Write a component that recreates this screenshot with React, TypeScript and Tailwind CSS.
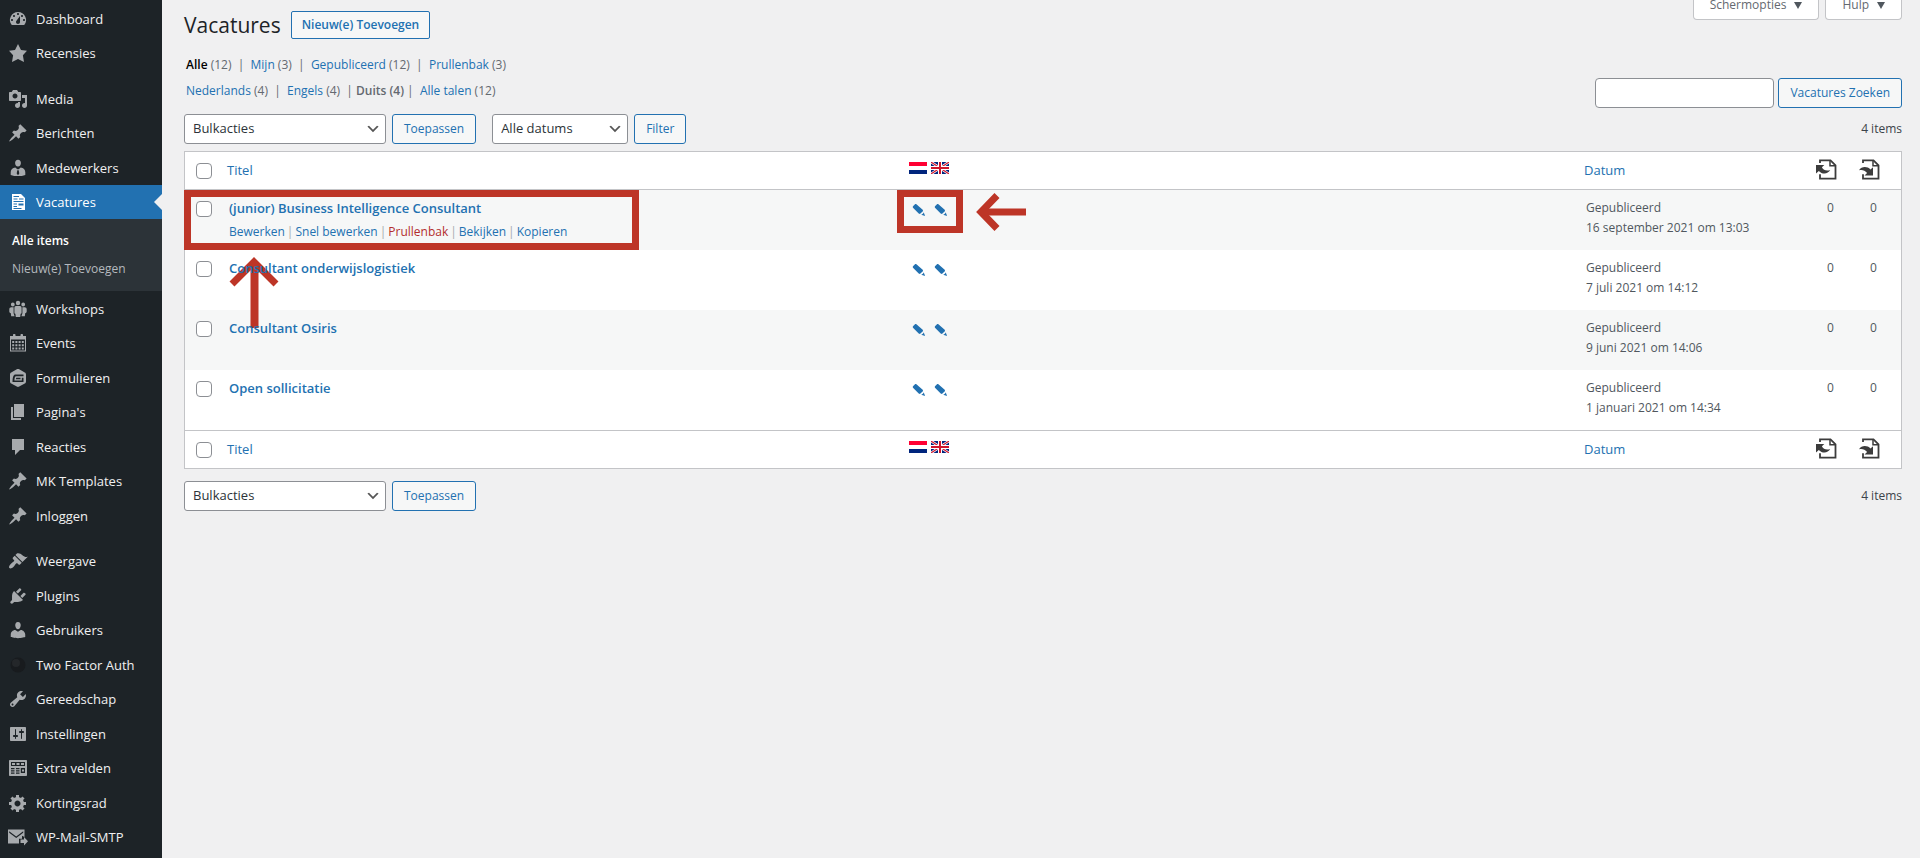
import { ReactNode } from "react"

const ICONS: Record<string, ReactNode> = {
  dashboard: (
    <path d="M3.76 16h12.48A7.998 7.998 0 0 0 10 3a7.998 7.998 0 0 0-6.24 13zM10 4c.55 0 1 .45 1 1s-.45 1-1 1-1-.45-1-1 .45-1 1-1zM6 6c.55 0 1 .45 1 1s-.45 1-1 1-1-.45-1-1 .45-1 1-1zm8 0c.55 0 1 .45 1 1s-.45 1-1 1-1-.45-1-1 .45-1 1-1zm-5.37 5.55L12 7v6c0 1.1-.9 2-2 2s-2-.9-2-2c0-.57.24-1.08.63-1.45zM4 10c.55 0 1 .45 1 1s-.45 1-1 1-1-.45-1-1 .45-1 1-1zm12 0c.55 0 1 .45 1 1s-.45 1-1 1-1-.45-1-1 .45-1 1-1z" />
  ),
  star: <path d="m10 1 3 6 6 .75-4.12 4.62L16 19l-6-3-6 3 1.13-6.63L1 7.75 7 7z" />,
  media: (
    <path d="M13 11V4c0-.55-.45-1-1-1h-1.67L9 1H5L3.67 3H2c-.55 0-1 .45-1 1v7c0 .55.45 1 1 1h10c.55 0 1-.45 1-1zM7 4.5c1.38 0 2.5 1.12 2.5 2.5S8.38 9.5 7 9.5 4.5 8.38 4.5 7 5.62 4.5 7 4.5zM14 6h5v10.5c0 1.38-1.12 2.5-2.5 2.5S14 17.88 14 16.5s1.12-2.5 2.5-2.5c.17 0 .34.02.5.05V9h-3V6zm-4 8.05V13h2v3.5c0 1.38-1.12 2.5-2.5 2.5S7 17.88 7 16.5 8.12 14 9.5 14c.17 0 .34.02.5.05z" />
  ),
  pin: (
    <path d="M10.44 3.02l1.82-1.82 6.36 6.35-1.83 1.82c-1.05-.68-2.48-.57-3.41.36l-.75.75c-.92.93-1.04 2.35-.35 3.41l-1.83 1.82-2.41-2.41-2.8 2.79c-.42.42-3.38 2.71-3.8 2.29s1.86-3.39 2.28-3.81l2.79-2.79L4.1 9.36l1.83-1.82c1.05.69 2.48.57 3.4-.36l.75-.75c.93-.92 1.05-2.35.36-3.41z" />
  ),
  businessman: (
    <path
      fillRule="evenodd"
      d="M10 8.6c-1.9 0-2.9-1.7-2.9-3.6S8.1 1.7 10 1.7 12.9 3.1 12.9 5 11.9 8.6 10 8.6zM7.3 9.4 9.3 11.3h1.4L12.7 9.4c2.8.3 4.6 2.3 4.6 4.9v2.6c-2.2.8-4.7 1.2-7.3 1.2s-5.1-.4-7.3-1.2v-2.6c0-2.6 1.8-4.6 4.6-4.9zM9.3 12.2 8.7 15.6 10 17.2l1.3-1.6-.6-3.4z"
    />
  ),
  document: (
    <path
      fillRule="evenodd"
      d="M4 2h9l4 4v12H4zM5.5 4v1h5.5V4zM5.5 6.5v1h4v-1zM11 6.5v1h4.500v-1zM5.5 9v1h10V9zM5.5 11.500v1h3.500v-1zM10.500 11.500v2h5v-2zM5.500 14v1h3.500v-1zM5.500 16v1h8v-1z"
    />
  ),
  groups: (
    <path d="M10 1.8a2.200 2.200 0 1 1 0 4.400 2.200 2.200 0 0 1 0-4.400zM4.800 3.600a1.900 1.900 0 1 1 0 3.800 1.900 1.900 0 0 1 0-3.800zM15.200 3.600a1.900 1.900 0 1 1 0 3.800 1.900 1.900 0 0 1 0-3.800zM8 7h4c1.100 0 1.600.9 1.600 2v4.500c0 .8-.4 1.200-1 1.300L12.200 18H7.800l-.4-3.200c-.6-.1-1-.5-1-1.300V9c0-1.100.5-2 1.600-2zM3.300 8.200h2.300v6.100l1 2.900H3.200L2.700 14C1.800 13.800 1.300 13.300 1.300 12.400V10.200c0-1.100.8-2 2-2zM16.700 8.200h-2.300v6.100l-1 2.900h3.400l.5-3.200c.9-.2 1.400-.7 1.400-1.600V10.200c0-1.100-.8-2-2-2z" />
  ),
  calendar: (
    <path
      fillRule="evenodd"
      d="M5 3V2c0-.6.4-1 1-1h.5c.6 0 1 .4 1 1v1h5V2c0-.6.4-1 1-1h.5c.6 0 1 .4 1 1v1h3v15.500H2V3zM3 6.500v11h14v-11zM4.200 8h2v2h-2zM7.400 8h2v2h-2zM10.600 8h2v2h-2zM13.800 8h2v2h-2zM4.200 11.200h2v2h-2zM7.400 11.200h2v2h-2zM10.600 11.200h2v2h-2zM13.800 11.200h2v2h-2zM4.200 14.400h2v2h-2zM7.400 14.400h2v2h-2zM10.600 14.400h2v2h-2zM13.800 14.400h2v2h-2z"
    />
  ),
  forms: (
    <path
      fillRule="evenodd"
      d="M11.200 1.300l5.600 3.200c.7.4 1.200 1.200 1.200 2v6.900c0 .8-.5 1.600-1.200 2l-5.600 3.200c-.7.4-1.700.4-2.400 0l-5.600-3.200c-.7-.4-1.200-1.200-1.200-2V6.500c0-.8.5-1.600 1.200-2l5.600-3.200c.7-.4 1.700-.4 2.400 0zM7.500 6.500C5.500 6.500 4.700 8.500 4.500 14h11v-4.300h-1.700v2.700H6.400c.2-3 .6-4.100 1.600-4.100h7.500V6.500zM8.300 9.700 7.800 11.300h4.700v-1.600z"
    />
  ),
  page: <path d="M6 15V2h10v13H6zm-1 1h8v2H3V5h2v11z" />,
  comment: <path d="M4 2h12v11h-4l-5 5v-5H4z" />,
  brush: (
    <path d="M14.48 11.06L7.41 3.99l1.5-1.5c.5-.56 2.3-.47 3.51.32 1.21.8 1.43 1.28 2.91 2.1 1.18.64 2.45 1.26 4.45.85zm-.71.71L6.7 4.7 4.93 6.47c-.39.39-.39 1.02 0 1.41l1.06 1.06c.39.39.39 1.03 0 1.42-.6.6-1.43 1.11-2.21 1.69-.35.26-.7.53-1.01.84C1.43 14.23.4 16.08 1.4 17.07c.99 1 2.84-.03 4.18-1.36.31-.31.58-.66.85-1.02.57-.78 1.08-1.61 1.69-2.21.39-.39 1.02-.39 1.41 0l1.06 1.06c.39.39 1.02.39 1.41 0z" />
  ),
  plug: (
    <path d="M13.11 4.36L9.87 7.6 8 5.73l3.24-3.24c.35-.34 1.05-.2 1.56.32.52.51.66 1.21.31 1.55zm-8 1.77l.91-1.12 9.01 9.01-1.19.84c-.71.71-2.63 1.16-3.82 1.16H6.14L4.9 17.26c-.59.59-1.54.59-2.12 0-.59-.58-.59-1.53 0-2.12l1.24-1.24v-3.88c0-1.13.4-3.19 1.09-3.89zm7.26 3.97l3.24-3.24c.34-.35 1.04-.21 1.55.31.52.51.66 1.21.31 1.55l-3.24 3.25z" />
  ),
  user: (
    <path d="M10 9.25c-2.27 0-2.73-3.44-2.73-3.44C7 4.02 7.82 2 9.97 2c2.16 0 2.98 2.02 2.71 3.81 0 0-.41 3.44-2.68 3.44zm0 2.57L12.72 10c2.39 0 4.52 2.33 4.52 4.53v2.49s-3.65 1.13-7.24 1.13c-3.65 0-7.24-1.13-7.24-1.13v-2.49c0-2.25 1.94-4.48 4.47-4.48z" />
  ),
  twoFactor: (
    <>
      <circle cx="10" cy="10" r="7.5" fill="#181b1e" />
      <circle cx="8" cy="8" r="4" fill="#24272a" />
    </>
  ),
  wrench: (
    <path d="M16.68 9.77c-1.34 1.34-3.3 1.67-4.95.99l-5.41 6.52c-.99.99-2.59.99-3.58 0s-.99-2.59 0-3.57l6.52-5.42c-.68-1.65-.35-3.61.99-4.95 1.28-1.28 3.12-1.62 4.72-1.06l-2.89 2.89 2.82 2.82 2.86-2.87c.53 1.58.18 3.39-1.08 4.65zM3.81 16.21c.4.39 1.04.39 1.43 0 .4-.4.4-1.04 0-1.43-.39-.4-1.03-.4-1.43 0-.39.39-.39 1.03 0 1.43z" />
  ),
  sliders: (
    <path d="M18 16V4c0-.55-.45-1-1-1H3c-.55 0-1 .45-1 1v12c0 .55.45 1 1 1h14c.55 0 1-.45 1-1zM8 11h1c.55 0 1 .45 1 1s-.45 1-1 1H8v1.5c0 .28-.22.5-.5.5s-.5-.22-.5-.5V13H6c-.55 0-1-.45-1-1s.45-1 1-1h1V5.5c0-.28.22-.5.5-.5s.5.22.5.5V11zm5-2h-1c-.55 0-1-.45-1-1s.45-1 1-1h1V5.5c0-.28.22-.5.5-.5s.5.22.5.5V7h1c.55 0 1 .45 1 1s-.45 1-1 1h-1v5.5c0 .28-.22.5-.5.5s-.5-.22-.5-.5V9z" />
  ),
  fields: (
    <path
      fillRule="evenodd"
      d="M19 17V3c0-.55-.45-1-1-1H2c-.55 0-1 .45-1 1v14c0 .55.45 1 1 1h16c.55 0 1-.45 1-1zM3 4h14v4H3zM4 5v2h3V5zM8.500 5v2h3V5zM13 5v2h3V5zM3 10h3.500v1.200H3zM8 10h3.500v1.200H8zM3 12.300h3.500v1.200H3zM8 12.300h3.500v1.200H8zM3 14.600h3.500v1.200H3zM8 14.600h3.500v1.200H8zM12.800 10H17v5h-4.200zM14 11.500v2h2v-2z"
    />
  ),
  gear: (
    <path d="M18 12h-2.18c-.17.7-.44 1.35-.81 1.93l1.54 1.54-2.1 2.1-1.54-1.54c-.58.36-1.23.63-1.91.79V19H8v-2.18c-.68-.16-1.33-.43-1.91-.79l-1.54 1.54-2.12-2.12 1.54-1.54c-.36-.58-.63-1.23-.79-1.91H1V9.03h2.17c.16-.7.44-1.35.8-1.94L2.43 5.55l2.1-2.1 1.54 1.54c.58-.37 1.24-.64 1.93-.81V2h3v2.18c.68.16 1.33.43 1.91.79l1.54-1.54 2.12 2.12-1.54 1.54c.36.59.64 1.24.8 1.94H18V12zm-8.5 1.5c1.66 0 3-1.34 3-3s-1.34-3-3-3-3 1.34-3 3 1.34 3 3 3z" />
  ),
  mail: (
    <path
      fillRule="evenodd"
      d="M0 2.500h16.500v7.500l-2.500-1.200v3H11v4.700H0zM1.200 4.200v1.500L8.200 11l7-5.300V4.200l-7 5.200zM12.500 12.500H16V10l4 4.200-4 4.200V16h-3.500z"
    />
  ),
}

const MENU = [
  { label: "Dashboard", icon: "dashboard" },
  { label: "Recensies", icon: "star" },
  { label: "Media", icon: "media", gap: true },
  { label: "Berichten", icon: "pin" },
  { label: "Medewerkers", icon: "businessman" },
  { label: "Vacatures", icon: "document", active: true },
  { label: "Workshops", icon: "groups" },
  { label: "Events", icon: "calendar" },
  { label: "Formulieren", icon: "forms" },
  { label: "Pagina's", icon: "page" },
  { label: "Reacties", icon: "comment" },
  { label: "MK Templates", icon: "pin" },
  { label: "Inloggen", icon: "pin" },
  { label: "Weergave", icon: "brush", gap: true },
  { label: "Plugins", icon: "plug" },
  { label: "Gebruikers", icon: "user" },
  { label: "Two Factor Auth", icon: "twoFactor" },
  { label: "Gereedschap", icon: "wrench" },
  { label: "Instellingen", icon: "sliders" },
  { label: "Extra velden", icon: "fields" },
  { label: "Kortingsrad", icon: "gear" },
  { label: "WP-Mail-SMTP", icon: "mail" },
]

const STATUS_LINKS = [
  { label: "Alle", count: 12, current: true },
  { label: "Mijn", count: 3 },
  { label: "Gepubliceerd", count: 12 },
  { label: "Prullenbak", count: 3 },
]

const ROWS = [
  { title: "(junior) Business Intelligence Consultant", date: "16 september 2021 om 13:03", marked: true },
  { title: "Consultant onderwijslogistiek", date: "7 juli 2021 om 14:12" },
  { title: "Consultant Osiris", date: "9 juni 2021 om 14:06" },
  { title: "Open sollicitatie", date: "1 januari 2021 om 14:34" },
]

const ACTIONS = ["Bewerken", "Snel bewerken", "Prullenbak", "Bekijken", "Kopieren"]

function Sidebar() {
  return (
    <nav className="w-[162px] shrink-0 self-stretch bg-[#1d2327] pt-[2px]">
      <ul>
        {MENU.map((item) => (
          <li key={item.label} className={item.gap ? "pt-[11px] even:pb-px" : "even:pb-px"}>
            <a
              href="#"
              className={`relative flex h-[34px] items-center pl-2 text-[13px] leading-[18px] ${item.active ? "bg-[#2271b1] text-white" : "text-[#f0f0f1]"}`}
            >
              <svg viewBox="0 0 20 20" className={`mr-2 h-5 w-5 shrink-0 ${item.active ? "fill-white" : "fill-[#a7aaad]"}`}>
                {ICONS[item.icon]}
              </svg>
              <span className="whitespace-nowrap">{item.label}</span>
              {item.active && (
                <span className="absolute right-0 border-y-8 border-r-8 border-y-transparent border-r-[#f0f0f1]" />
              )}
            </a>
            {item.active && (
              <ul className="bg-[#2c3338] px-3 py-2 text-[12px] leading-[18px]">
                <li className="py-[5px]">
                  <a href="#" className="font-semibold text-white">Alle items</a>
                </li>
                <li className="py-[5px] whitespace-nowrap">
                  <a href="#" className="text-[#b4b9be]">Nieuw(e) Toevoegen</a>
                </li>
              </ul>
            )}
          </li>
        ))}
      </ul>
    </nav>
  )
}

function Button({ children }: { children: ReactNode }) {
  return (
    <button className="h-[30px] rounded-[3px] border border-[#2271b1] bg-[#f6f7f7] px-[11px] text-[12px] whitespace-nowrap text-[#2271b1]">
      {children}
    </button>
  )
}

function Select({ label, width }: { label: string; width: string }) {
  return (
    <div className={`relative ${width}`}>
      <select
        aria-label={label}
        className="block h-[30px] w-full appearance-none rounded-[3px] border border-[#8c8f94] bg-white pr-6 pl-2 text-[13px] text-[#2c3338]"
      >
        <option>{label}</option>
      </select>
      <svg viewBox="0 0 20 20" className="pointer-events-none absolute top-[7px] right-[5px] h-4 w-4 fill-[#555]">
        <path d="M5 6l5 5 5-5 2 1-7 7-7-7 2-1z" />
      </svg>
    </div>
  )
}

function Checkbox({ label }: { label: string }) {
  return (
    <input
      type="checkbox"
      aria-label={label}
      className="block h-4 w-4 appearance-none rounded-[4px] border border-[#8c8f94] bg-white"
    />
  )
}

function Flags() {
  return (
    <div className="flex gap-1">
      <svg viewBox="0 0 18 12" className="h-3 w-[18px]" role="img" aria-label="Nederlands">
        <path fill="#f03" d="M0 0h18v4H0z" />
        <path fill="#fff" d="M0 4h18v4H0z" />
        <path fill="#00257d" d="M0 8h18v4H0z" />
      </svg>
      <svg viewBox="0 0 18 12" className="h-3 w-[18px]" role="img" aria-label="English">
        <path fill="#00247d" d="M0 0h18v12H0z" />
        <path stroke="#fff" strokeWidth="2.6" d="M0 0l18 12M18 0L0 12" />
        <path stroke="#cf142b" strokeWidth="1.1" d="M0 0l18 12M18 0L0 12" />
        <path stroke="#fff" strokeWidth="4" d="M9 0v12M0 6h18" />
        <path stroke="#cf142b" strokeWidth="2" d="M9 0v12M0 6h18" />
      </svg>
    </div>
  )
}

function Pencil() {
  return (
    <a href="#" aria-label="Vertaling bewerken" className="block">
      <svg viewBox="0 0 14 14" className="h-[14px] w-[14px] fill-[#2271b1]">
        <path d="M1 3.300 3 1.200c.4-.4 1-.4 1.400 0l6.300 5.600.4 1.200-3.200 3.100-1.200-.5L1 4.700c-.4-.4-.4-1 0-1.400z" />
        <path d="M11.700 9.300l1.400 3.800-3.900-1.300 1-.6 1.100-1z" />
      </svg>
    </a>
  )
}

function DocIcon({ out }: { out?: boolean }) {
  return (
    <svg viewBox="0 0 21 21" className="h-[21px] w-[21px]">
      <path fill="none" stroke="#3c3c3c" strokeWidth="1.8" d="M4 4V1.300h10.500l5 5v13.400H4v-4.500" />
      <path fill="none" stroke="#3c3c3c" strokeWidth="1.5" d="M14 1.500v5.300h5.500" />
      {out ? (
        <path fill="#3c3c3c" d="M0 11.200C2.500 7.300 8 7 11.500 10.500L14 8.200v8.300H5.500l2.600-2.400C6 11.300 3 10.300 0 11.200z" />
      ) : (
        <path fill="#3c3c3c" d="M0 6h8.300L5.900 8.300c1.500 3 4.700 4 8.300 2.700-2.300 4.300-8 4.600-11.400.9L0 14.500z" />
      )}
    </svg>
  )
}

function HeadCells() {
  return (
    <>
      <th className="pl-[11px] text-left">
        <Checkbox label="Alles selecteren" />
      </th>
      <th className="pl-[10px] text-left font-normal">
        <a href="#" className="text-[13px] text-[#2271b1]">Titel</a>
      </th>
      <th className="pb-[6px] pl-[10px]">
        <Flags />
      </th>
      <th className="pl-[10px] text-left font-normal">
        <a href="#" className="text-[13px] text-[#2271b1]">Datum</a>
      </th>
      <th className="pb-[2px] pl-[9px]">
        <DocIcon />
      </th>
      <th className="pb-[2px] pl-[9px]">
        <DocIcon out />
      </th>
    </>
  )
}

function PostsTable() {
  return (
    <table className="w-full table-fixed border-separate border-spacing-0 border border-[#c3c4c7] bg-white text-[12px] leading-5 text-[#50575e]">
      <colgroup>
        <col className="w-8" />
        <col />
        <col className="w-[675px]" />
        <col className="w-[233px]" />
        <col className="w-[43px]" />
        <col className="w-[51px]" />
      </colgroup>
      <thead>
        <tr className="h-[38px] *:border-b *:border-[#c3c4c7]">
          <HeadCells />
        </tr>
      </thead>
      <tbody>
        {ROWS.map((row) => (
          <tr key={row.title} className="h-[60px] align-top odd:bg-[#f6f7f7]">
            <td className="pt-[11px] pl-[11px]">
              <Checkbox label={`Selecteer ${row.title}`} />
            </td>
            <td className="relative pt-2 pl-3 whitespace-nowrap">
              <a href="#" className="block text-[13px] font-semibold text-[#2271b1]">{row.title}</a>
              {row.marked && (
                <>
                  <div className="mt-1 flex">
                    {ACTIONS.map((action, n) => (
                      <span key={action} className="text-[#a7aaad]">
                        <a href="#" className={action === "Prullenbak" ? "text-[#b32d2e]" : "text-[#2271b1]"}>{action}</a>
                        {n < ACTIONS.length - 1 && <span className="px-[2px]">|</span>}
                      </span>
                    ))}
                  </div>
                  <div className="pointer-events-none absolute top-0 -left-[33px] h-[60px] w-[455px] border-[7px] border-[#bd3527]" />
                  <svg viewBox="0 0 50 72" className="pointer-events-none absolute top-[67px] left-3 h-[72px] w-[50px]">
                    <path fill="none" stroke="#bd3527" strokeWidth="7" d="M3 27 25 5l22 22" />
                    <path fill="#bd3527" d="M21.500 5h8v66h-8z" />
                  </svg>
                </>
              )}
            </td>
            <td className="relative pt-[13px] pl-[13px]">
              <div className="flex gap-2">
                <Pencil />
                <Pencil />
              </div>
              {row.marked && (
                <>
                  <div className="pointer-events-none absolute top-0 left-[-2px] h-[43px] w-[66px] border-[7px] border-[#bd3527]" />
                  <svg viewBox="0 0 50 38" className="pointer-events-none absolute top-[3px] left-[77px] h-[38px] w-[50px]">
                    <path fill="none" stroke="#bd3527" strokeWidth="7" d="M21 2.500 5 19l16 16.500" />
                    <path fill="#bd3527" d="M5 15.500h45v7H5z" />
                  </svg>
                </>
              )}
            </td>
            <td className="pt-2 pl-3">
              Gepubliceerd
              <br />
              {row.date}
            </td>
            <td className="pt-2 pl-5">0</td>
            <td className="pt-2 pl-5">0</td>
          </tr>
        ))}
      </tbody>
      <tfoot>
        <tr className="h-[38px] *:border-t *:border-[#c3c4c7]">
          <HeadCells />
        </tr>
      </tfoot>
    </table>
  )
}

export default function App() {
  return (
    <div className="flex min-h-screen bg-[#f0f0f1] font-['Open_Sans','Noto_Sans',sans-serif] text-[12px] text-[#3c434a]">
      <Sidebar />
      <main className="min-w-0 flex-1 pr-[18px] pl-[22px]">
        <div className="flex items-start justify-between">
          <div className="flex items-center gap-[10px] pt-[10px]">
            <h1 className="text-[21px] leading-[30px] text-[#1d2327]">Vacatures</h1>
            <button className="h-7 rounded-[2px] border border-[#2271b1] bg-[#f6f7f7] px-[10px] text-[12px] font-semibold text-[#2271b1]">
              Nieuw(e) Toevoegen
            </button>
          </div>
          <div className="flex gap-[6px]">
            {["Schermopties", "Hulp"].map((label) => (
              <button
                key={label}
                className="flex h-5 items-center gap-2 rounded-b-[4px] border border-t-0 border-[#c3c4c7] bg-white px-4 pb-[9px] text-[12px] leading-[10px] text-[#646970]"
              >
                {label}
                <span className="border-x-4 border-t-[7px] border-x-transparent border-t-[#50575e]" />
              </button>
            ))}
          </div>
        </div>

        <div className="flex justify-between">
          <div className="pt-3 pb-1 pl-[2px] leading-[26px] text-[#646970]">
            <div className="whitespace-pre">
              {STATUS_LINKS.map((s, i) => (
                <span key={s.label}>
                  <a href="#" className={s.current ? "font-semibold text-black" : "text-[#2271b1]"}>{s.label}</a>
                  {` (${s.count})`}
                  {i < STATUS_LINKS.length - 1 && "  |  "}
                </span>
              ))}
            </div>
            <div className="whitespace-pre">
              <a href="#" className="text-[#2271b1]">Nederlands</a>
              {" (4)  |  "}
              <a href="#" className="text-[#2271b1]">Engels</a>
              {" (4)  | "}
              <span className="font-semibold">Duits (4)</span>
              {" |  "}
              <a href="#" className="text-[#2271b1]">Alle talen</a>
              {" (12)"}
            </div>
          </div>
          <div className="flex items-end gap-1">
            <input
              type="search"
              aria-label="Vacatures Zoeken"
              className="h-[30px] w-[179px] rounded-[4px] border border-[#8c8f94] bg-white px-2"
            />
            <Button>Vacatures Zoeken</Button>
          </div>
        </div>

        <div className="mt-[6px] flex items-center justify-between">
          <div className="flex items-center gap-[6px]">
            <Select label="Bulkacties" width="w-[202px]" />
            <Button>Toepassen</Button>
            <span className="w-1" />
            <Select label="Alle datums" width="w-[136px]" />
            <Button>Filter</Button>
          </div>
          <span>4 items</span>
        </div>

        <div className="pt-[7px] pb-3">
          <PostsTable />
        </div>

        <div className="flex items-center justify-between">
          <div className="flex items-center gap-[6px]">
            <Select label="Bulkacties" width="w-[202px]" />
            <Button>Toepassen</Button>
          </div>
          <span>4 items</span>
        </div>
      </main>
    </div>
  )
}
